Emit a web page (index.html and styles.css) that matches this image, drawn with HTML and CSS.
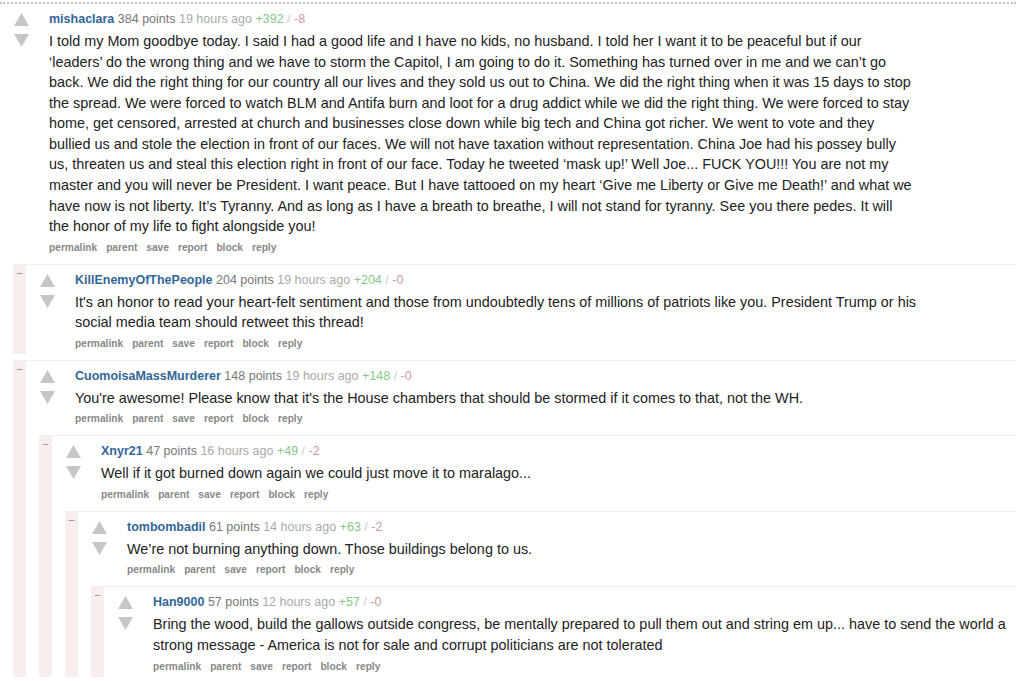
FILE: index.html
```html
<!DOCTYPE html>
<html>
<head>
<meta charset="utf-8">
<link rel="stylesheet" href="styles.css">
</head>
<body>
<div class="thread">
  <div class="comment top">
    <div class="main">
      <div class="entry">
        <div class="votes">
          <svg class="arrow" width="15" height="13" viewBox="0 0 15 13"><polygon points="7.5,0 15,13 0,13"/></svg>
          <svg class="arrow" width="15" height="13" viewBox="0 0 15 13"><polygon points="0,0 15,0 7.5,13"/></svg>
        </div>
        <div class="content">
          <div class="tagline"><a class="author">mishaclara</a> <span class="score">384 points</span> <span class="time">19 hours ago</span> <span class="up">+392</span> <span class="sep">/</span> <span class="down">-8</span></div>
          <div class="md">I told my Mom goodbye today. I said I had a good life and I have no kids, no husband. I told her I want it to be peaceful but if our ‘leaders’ do the wrong thing and we have to storm the Capitol, I am going to do it. Something has turned over in me and we can’t go back. We did the right thing for our country all our lives and they sold us out to China. We did the right thing when it was 15 days to stop the spread. We were forced to watch BLM and Antifa burn and loot for a drug addict while we did the right thing. We were forced to stay home, get censored, arrested at church and businesses close down while big tech and China got richer. We went to vote and they bullied us and stole the election in front of our faces. We will not have taxation without representation. China Joe had his possey bully us, threaten us and steal this election right in front of our face. Today he tweeted ‘mask up!’ Well Joe... FUCK YOU!!! You are not my master and you will never be President. I want peace. But I have tattooed on my heart ‘Give me Liberty or Give me Death!’ and what we have now is not liberty. It’s Tyranny. And as long as I have a breath to breathe, I will not stand for tyranny. See you there pedes. It will the honor of my life to fight alongside you!</div>
          <ul class="buttons"><li>permalink</li><li>parent</li><li>save</li><li>report</li><li>block</li><li>reply</li></ul>
        </div>
      </div>
      <div class="children">
        <div class="comment child">
          <div class="bar">–</div>
          <div class="main">
            <div class="entry">
              <div class="votes">
                <svg class="arrow" width="15" height="13" viewBox="0 0 15 13"><polygon points="7.5,0 15,13 0,13"/></svg>
                <svg class="arrow" width="15" height="13" viewBox="0 0 15 13"><polygon points="0,0 15,0 7.5,13"/></svg>
              </div>
              <div class="content">
                <div class="tagline"><a class="author">KillEnemyOfThePeople</a> <span class="score">204 points</span> <span class="time">19 hours ago</span> <span class="up">+204</span> <span class="sep">/</span> <span class="down">-0</span></div>
                <div class="md">It's an honor to read your heart-felt sentiment and those from undoubtedly tens of millions of patriots like you. President Trump or his social media team should retweet this thread!</div>
                <ul class="buttons"><li>permalink</li><li>parent</li><li>save</li><li>report</li><li>block</li><li>reply</li></ul>
              </div>
            </div>
          </div>
        </div>
        <div class="comment child">
          <div class="bar">–</div>
          <div class="main">
            <div class="entry">
              <div class="votes">
                <svg class="arrow" width="15" height="13" viewBox="0 0 15 13"><polygon points="7.5,0 15,13 0,13"/></svg>
                <svg class="arrow" width="15" height="13" viewBox="0 0 15 13"><polygon points="0,0 15,0 7.5,13"/></svg>
              </div>
              <div class="content">
                <div class="tagline"><a class="author">CuomoisaMassMurderer</a> <span class="score">148 points</span> <span class="time">19 hours ago</span> <span class="up">+148</span> <span class="sep">/</span> <span class="down">-0</span></div>
                <div class="md">You're awesome! Please know that it's the House chambers that should be stormed if it comes to that, not the WH.</div>
                <ul class="buttons"><li>permalink</li><li>parent</li><li>save</li><li>report</li><li>block</li><li>reply</li></ul>
              </div>
            </div>
            <div class="children">
              <div class="comment child">
                <div class="bar">–</div>
                <div class="main">
                  <div class="entry">
                    <div class="votes">
                      <svg class="arrow" width="15" height="13" viewBox="0 0 15 13"><polygon points="7.5,0 15,13 0,13"/></svg>
                      <svg class="arrow" width="15" height="13" viewBox="0 0 15 13"><polygon points="0,0 15,0 7.5,13"/></svg>
                    </div>
                    <div class="content">
                      <div class="tagline"><a class="author">Xnyr21</a> <span class="score">47 points</span> <span class="time">16 hours ago</span> <span class="up">+49</span> <span class="sep">/</span> <span class="down">-2</span></div>
                      <div class="md">Well if it got burned down again we could just move it to maralago...</div>
                      <ul class="buttons"><li>permalink</li><li>parent</li><li>save</li><li>report</li><li>block</li><li>reply</li></ul>
                    </div>
                  </div>
                  <div class="children">
                    <div class="comment child">
                      <div class="bar">–</div>
                      <div class="main">
                        <div class="entry">
                          <div class="votes">
                            <svg class="arrow" width="15" height="13" viewBox="0 0 15 13"><polygon points="7.5,0 15,13 0,13"/></svg>
                            <svg class="arrow" width="15" height="13" viewBox="0 0 15 13"><polygon points="0,0 15,0 7.5,13"/></svg>
                          </div>
                          <div class="content">
                            <div class="tagline"><a class="author">tombombadil</a> <span class="score">61 points</span> <span class="time">14 hours ago</span> <span class="up">+63</span> <span class="sep">/</span> <span class="down">-2</span></div>
                            <div class="md">We’re not burning anything down. Those buildings belong to us.</div>
                            <ul class="buttons"><li>permalink</li><li>parent</li><li>save</li><li>report</li><li>block</li><li>reply</li></ul>
                          </div>
                        </div>
                        <div class="children">
                          <div class="comment child">
                            <div class="bar">–</div>
                            <div class="main">
                              <div class="entry">
                                <div class="votes">
                                  <svg class="arrow" width="15" height="13" viewBox="0 0 15 13"><polygon points="7.5,0 15,13 0,13"/></svg>
                                  <svg class="arrow" width="15" height="13" viewBox="0 0 15 13"><polygon points="0,0 15,0 7.5,13"/></svg>
                                </div>
                                <div class="content">
                                  <div class="tagline"><a class="author">Han9000</a> <span class="score">57 points</span> <span class="time">12 hours ago</span> <span class="up">+57</span> <span class="sep">/</span> <span class="down">-0</span></div>
                                  <div class="md">Bring the wood, build the gallows outside congress, be mentally prepared to pull them out and string em up... have to send the world a strong message - America is not for sale and corrupt politicians are not tolerated</div>
                                  <ul class="buttons"><li>permalink</li><li>parent</li><li>save</li><li>report</li><li>block</li><li>reply</li></ul>
                                </div>
                              </div>
                            </div>
                          </div>
                        </div>
                      </div>
                    </div>
                  </div>
                </div>
              </div>
            </div>
          </div>
        </div>
      </div>
    </div>
  </div>
</div>
</body>
</html>
```

FILE: styles.css
```css
html, body {
  margin: 0;
  padding: 0;
  background: #ffffff;
  font-family: "Liberation Sans", Arial, sans-serif;
  overflow: hidden;
}

.thread {
  margin-top: 2px;
  border-top: 2px dotted #c4c4c4;
}

.comment {
  display: flex;
}

.comment.child {
  margin-top: 6px;
  border-top: 1px solid #efefef;
}

.bar {
  flex: none;
  width: 13px;
  background: #f7eeee;
  color: #8a8a8a;
  font-size: 10px;
  line-height: 12px;
  text-align: center;
  padding-top: 2px;
}

.main {
  flex: 1;
  min-width: 0;
}

.entry {
  display: flex;
}

.votes {
  flex: none;
  width: 49px;
  box-sizing: border-box;
  padding-left: 14px;
  padding-top: 9px;
  display: flex;
  flex-direction: column;
  gap: 8px;
}

.arrow {
  display: block;
  fill: #c6c6c6;
}

.content {
  flex: 1;
  min-width: 0;
  padding-top: 6px;
  padding-bottom: 2px;
}

.tagline {
  font-size: 12.5px;
  line-height: 18px;
  color: #888888;
}

.author {
  color: #336699;
  font-weight: bold;
}

.score {
  color: #777777;
}

.time {
  color: #aaaaaa;
}

.up {
  color: #88c788;
}

.sep {
  color: #cccccc;
}

.down {
  color: #c99a9a;
}

.md {
  margin-top: 3px;
  max-width: 60em;
  font-size: 14.4px;
  line-height: 20.57px;
  color: #222222;
}

.buttons {
  list-style: none;
  margin: 3px 0 0 0;
  padding: 0;
  display: flex;
  gap: 9px;
  font-size: 10.2px;
  line-height: 16px;
  font-weight: bold;
  color: #888888;
}

.children {
  margin-left: 13px;
}
```
